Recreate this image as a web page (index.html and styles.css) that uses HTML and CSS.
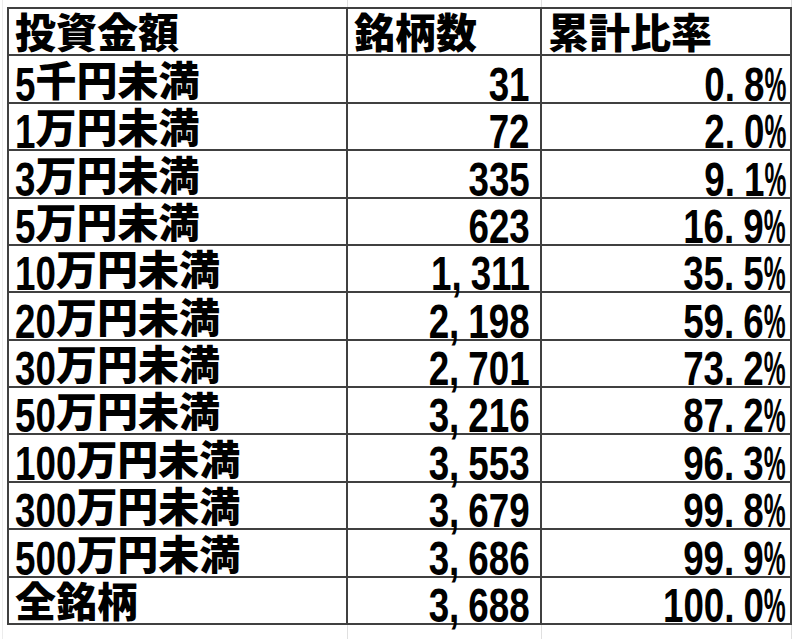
FILE: index.html
```html
<!DOCTYPE html>
<html lang="ja">
<head>
<meta charset="utf-8">
<title>投資金額別 銘柄数</title>
<link rel="stylesheet" href="styles.css">
</head>
<body>
<div class="sheet">
  <div class="strip strip-top"><span class="sc"></span><span class="sc"></span><span class="sc"></span></div>
  <div class="grid">
    <div class="cell head">投資金額</div>
    <div class="cell head">銘柄数</div>
    <div class="cell head">累計比率</div>

    <div class="cell label"><span class="num d1">5</span>千円未満</div>
    <div class="cell count"><span class="num">31</span></div>
    <div class="cell rate"><span class="num">0<span class="sep">.</span>8<span class="pct">%</span></span></div>

    <div class="cell label"><span class="num d1">1</span>万円未満</div>
    <div class="cell count"><span class="num">72</span></div>
    <div class="cell rate"><span class="num">2<span class="sep">.</span>0<span class="pct">%</span></span></div>

    <div class="cell label"><span class="num d1">3</span>万円未満</div>
    <div class="cell count"><span class="num">335</span></div>
    <div class="cell rate"><span class="num">9<span class="sep">.</span>1<span class="pct">%</span></span></div>

    <div class="cell label"><span class="num d1">5</span>万円未満</div>
    <div class="cell count"><span class="num">623</span></div>
    <div class="cell rate"><span class="num">16<span class="sep">.</span>9<span class="pct">%</span></span></div>

    <div class="cell label"><span class="num d2">10</span>万円未満</div>
    <div class="cell count"><span class="num">1<span class="sep">,</span>311</span></div>
    <div class="cell rate"><span class="num">35<span class="sep">.</span>5<span class="pct">%</span></span></div>

    <div class="cell label"><span class="num d2">20</span>万円未満</div>
    <div class="cell count"><span class="num">2<span class="sep">,</span>198</span></div>
    <div class="cell rate"><span class="num">59<span class="sep">.</span>6<span class="pct">%</span></span></div>

    <div class="cell label"><span class="num d2">30</span>万円未満</div>
    <div class="cell count"><span class="num">2<span class="sep">,</span>701</span></div>
    <div class="cell rate"><span class="num">73<span class="sep">.</span>2<span class="pct">%</span></span></div>

    <div class="cell label"><span class="num d2">50</span>万円未満</div>
    <div class="cell count"><span class="num">3<span class="sep">,</span>216</span></div>
    <div class="cell rate"><span class="num">87<span class="sep">.</span>2<span class="pct">%</span></span></div>

    <div class="cell label"><span class="num d3">100</span>万円未満</div>
    <div class="cell count"><span class="num">3<span class="sep">,</span>553</span></div>
    <div class="cell rate"><span class="num">96<span class="sep">.</span>3<span class="pct">%</span></span></div>

    <div class="cell label"><span class="num d3">300</span>万円未満</div>
    <div class="cell count"><span class="num">3<span class="sep">,</span>679</span></div>
    <div class="cell rate"><span class="num">99<span class="sep">.</span>8<span class="pct">%</span></span></div>

    <div class="cell label"><span class="num d3">500</span>万円未満</div>
    <div class="cell count"><span class="num">3<span class="sep">,</span>686</span></div>
    <div class="cell rate"><span class="num">99<span class="sep">.</span>9<span class="pct">%</span></span></div>

    <div class="cell label">全銘柄</div>
    <div class="cell count"><span class="num">3<span class="sep">,</span>688</span></div>
    <div class="cell rate"><span class="num">100<span class="sep">.</span>0<span class="pct">%</span></span></div>
  </div>
  <div class="strip strip-bottom"><span class="sc"></span><span class="sc"></span><span class="sc"></span></div>
</div>
</body>
</html>
```
FILE: styles.css
```css
html, body {
  margin: 0;
  padding: 0;
  background: #ffffff;
}

.sheet {
  width: 798px;
  height: 639px;
  overflow: hidden;
  margin-left: 2px;
  border-left: 1px solid #ececec;
  padding-left: 4px;
  box-sizing: border-box;
  background: #ffffff;
}

.strip {
  display: grid;
  grid-template-columns: 339px 194px 250px;
  margin-left: 2px;
}

.strip-top {
  height: 7px;
}

.strip-bottom {
  height: 16px;
}

.strip .sc {
  border-right: 1px solid #e0e0e0;
}

.grid {
  display: grid;
  grid-template-columns: 339px 194px 250px;
  grid-auto-rows: 47.385px;
  width: 785px;
  box-sizing: border-box;
  border-top: 2px solid #404040;
  border-left: 2px solid #404040;
  font-family: "Noto Sans CJK JP", "Noto Sans CJK SC", sans-serif;
  font-weight: 900;
  font-size: 41px;
  color: #000000;
}

.cell {
  box-sizing: border-box;
  border-right: 2px solid #404040;
  border-bottom: 2px solid #404040;
  display: flex;
  align-items: flex-end;
  line-height: 41px;
  padding-bottom: 3px;
  white-space: nowrap;
}

.head,
.label {
  padding-left: 6px;
}

.count {
  justify-content: flex-end;
  padding-right: 10px;
}

.rate {
  justify-content: flex-end;
  padding-right: 4px;
}

.num {
  display: inline-block;
  font-family: "Liberation Sans", Arial, sans-serif;
  font-weight: 700;
  font-size: 49px;
  line-height: 30px;
  vertical-align: -2px;
  transform: scaleX(0.75);
  transform-origin: right bottom;
}

.label .num {
  transform-origin: left bottom;
}

.label .d1 {
  margin-right: -6.8px;
}

.label .d2 {
  margin-right: -13.6px;
}

.label .d3 {
  margin-right: -20.4px;
}

.sep {
  margin-right: 12px;
}

.pct {
  display: inline-block;
  transform: scaleX(0.67);
  transform-origin: right bottom;
  margin-left: -14.4px;
}
```
